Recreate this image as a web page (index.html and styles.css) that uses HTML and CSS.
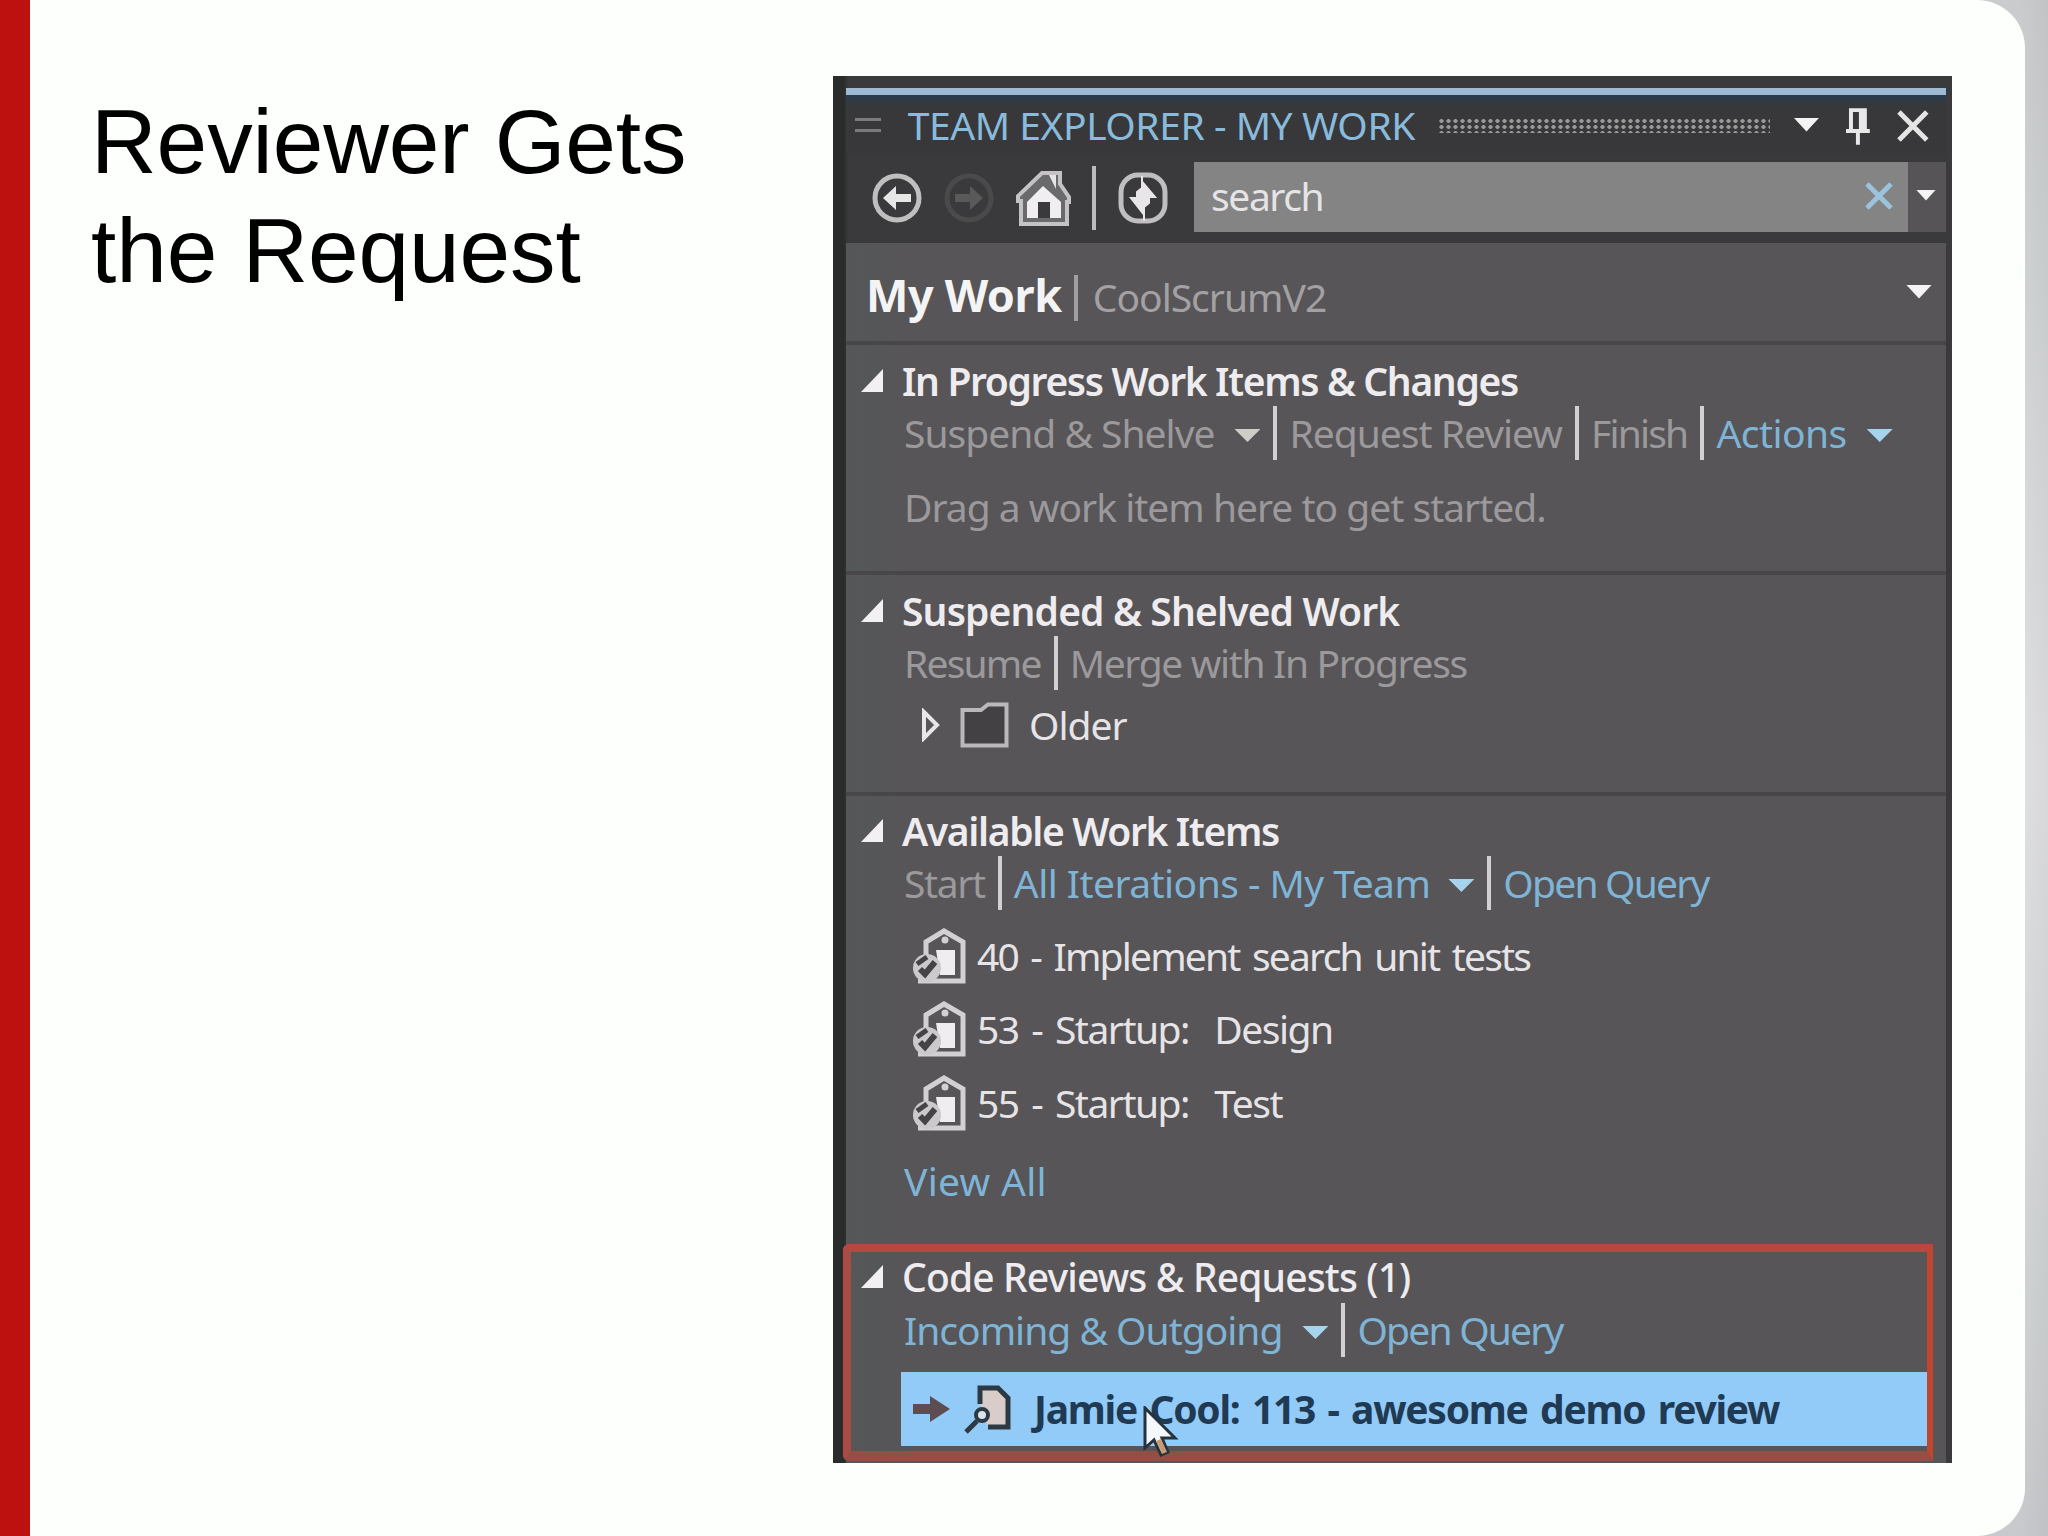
FILE: index.html
```html
<!DOCTYPE html>
<html lang="en">
<head>
    <meta charset="UTF-8">
    <meta name="viewport" content="width=device-width, initial-scale=1.0">
    <title>Reviewer Gets the Request</title>
    <link rel="stylesheet" href="styles.css">
</head>
<body>
    <!-- shared icons -->
    <svg class="defs">
        <symbol id="task" viewBox="0 0 54 56">
            <path d="M14 28V14L32 3l19 11v39H6" fill="none" stroke="#d2d0d2" stroke-width="5"/>
            <circle cx="33" cy="12" r="3.5" fill="#d2d0d2"/>
            <path d="M24 22h19v25H28z" fill="#efedef"/>
            <circle cx="15" cy="40" r="14" fill="#ccc9cc"/>
            <path d="M8 41l5 5 10-12" fill="none" stroke="#454345" stroke-width="6"/>
            <path d="M5 36l10-7" stroke="#454345" stroke-width="5"/>
        </symbol>
        <symbol id="fold" viewBox="0 0 22 23">
            <path d="M22 0v23H0z" fill="#f2f0f2"/>
        </symbol>
    </svg>

    <div class="slide">
        <h1>Reviewer Gets<br>the Request</h1>

        <div class="explorer">
            <div class="titlebar">
                <span class="grip"></span>
                <span class="caption">TEAM EXPLORER - MY WORK</span>
                <span class="dots"></span>
                <i class="arrow big"></i>
                <svg class="pin" width="24" height="38" viewBox="0 0 24 38">
                    <path d="M5 23V3h14v20M0 24h24M12 24v14" fill="none" stroke="#e8e8e8" stroke-width="4"/>
                    <path d="M13 3h6v20h-6z" fill="#e8e8e8"/>
                </svg>
                <svg class="close" width="32" height="32" viewBox="0 0 32 32">
                    <path d="M2 2l28 28M30 2L2 30" stroke="#e4e4e4" stroke-width="5"/>
                </svg>
            </div>

            <div class="toolbar">
                <svg width="52" height="52" viewBox="0 0 52 52">
                    <circle cx="26" cy="26" r="22" fill="none" stroke="#bfbfbf" stroke-width="5"/>
                    <path d="M12 26l13-12v8h15v8H25v8z" fill="#e6e6e6"/>
                </svg>
                <svg class="forward" width="52" height="52" viewBox="0 0 52 52">
                    <circle cx="26" cy="26" r="22" fill="none" stroke="#4b4a4b" stroke-width="5"/>
                    <path d="M40 26L27 14v8H12v8h15v8z" fill="#5a595a"/>
                </svg>
                <svg class="home" width="56" height="58" viewBox="0 0 56 58">
                    <path d="M5 55V32H2v-5L26 4h18v11l9 13v5h-2v22z" fill="#6a696b" stroke="#c4c2c5" stroke-width="4"/>
                    <path d="M27 17L11 33v16h34V33z" fill="#f0eef1"/>
                    <path d="M22 33h12v16H22z" fill="#3a393b"/>
                    <path d="M33 6h7v14z" fill="#e6e4e6"/>
                </svg>
                <i class="split"></i>
                <svg class="refresh" width="50" height="52" viewBox="0 0 50 52">
                    <rect x="3" y="3" width="44" height="46" rx="17" fill="none" stroke="#c0bec0" stroke-width="5"/>
                    <path d="M24 4v12l-5 4v6h-6l11 14zM26 49V35l5-4v-6h6L26 12z" fill="#e8e6e8" stroke="#e8e6e8" stroke-width="2"/>
                </svg>
                <div class="search">
                    <span>search</span>
                    <svg width="28" height="28" viewBox="0 0 28 28">
                        <path d="M2 2l24 24M26 2L2 26" stroke="#9cc3dc" stroke-width="5"/>
                    </svg>
                </div>
                <div class="search-menu"><i class="arrow small"></i></div>
            </div>

            <div class="content">
                <div class="header">
                    <b>My Work</b>
                    <i class="bar"></i>
                    <span>CoolScrumV2</span>
                    <i class="arrow big"></i>
                </div>

                <section class="progress">
                    <h2 class="tight"><svg><use href="#fold"/></svg>In Progress Work Items &amp; Changes</h2>
                    <div class="links">
                        <span>Suspend &amp; Shelve</span><i class="arrow"></i>
                        <i class="sep"></i>
                        <span>Request Review</span>
                        <i class="sep"></i>
                        <span class="tighter">Finish</span>
                        <i class="sep"></i>
                        <a class="wide">Actions</a><i class="arrow blue"></i>
                    </div>
                    <p class="hint">Drag a work item here to get started.</p>
                </section>

                <section class="suspended">
                    <h2><svg><use href="#fold"/></svg>Suspended &amp; Shelved Work</h2>
                    <div class="links">
                        <span class="tighter">Resume</span>
                        <i class="sep"></i>
                        <span class="tight">Merge with In Progress</span>
                    </div>
                    <div class="folder">
                        <svg width="18" height="34" viewBox="0 0 18 34">
                            <path d="M2 4v26L15 17z" fill="none" stroke="#e8e6e8" stroke-width="4"/>
                        </svg>
                        <svg width="49" height="46" viewBox="0 0 49 46">
                            <path d="M2.500 43.500V8H21l7-5.500h18.500v41z" fill="#434143" stroke="#bab8ba" stroke-width="4"/>
                        </svg>
                        <span>Older</span>
                    </div>
                </section>

                <section class="available">
                    <h2 class="tight"><svg><use href="#fold"/></svg>Available Work Items</h2>
                    <div class="links">
                        <span class="tight">Start</span>
                        <i class="sep"></i>
                        <a class="wide">All Iterations - My Team</a><i class="arrow blue"></i>
                        <i class="sep"></i>
                        <a class="tighter">Open Query</a>
                    </div>
                    <ul>
                        <li><svg><use href="#task"/></svg>40 - Implement search unit tests</li>
                        <li><svg><use href="#task"/></svg>53 - Startup:&nbsp; Design</li>
                        <li><svg><use href="#task"/></svg>55 - Startup:&nbsp; Test</li>
                    </ul>
                    <a class="view-all">View All</a>
                </section>

                <section class="reviews">
                    <h2><svg><use href="#fold"/></svg>Code Reviews &amp; Requests (1)</h2>
                    <div class="links">
                        <a>Incoming &amp; Outgoing</a><i class="arrow blue"></i>
                        <i class="sep"></i>
                        <a class="tighter">Open Query</a>
                    </div>
                    <div class="review">
                        <svg width="37" height="26" viewBox="0 0 37 26">
                            <path d="M0 8h17V0l20 13-20 13v-8H0z" fill="#5b4d52"/>
                        </svg>
                        <svg class="doc" width="48" height="50" viewBox="0 0 48 50">
                            <path d="M16 20V4h18l10 10v29H24" fill="#d9cdc9" stroke="#2d3a44" stroke-width="5"/>
                            <circle cx="18" cy="31" r="6" fill="#d9e4ee" stroke="#2d3a44" stroke-width="4"/>
                            <path d="M13 37L2 48" stroke="#2d3a44" stroke-width="5"/>
                        </svg>
                        <span>Jamie Cool: 113 - awesome demo review</span>
                        <svg class="cursor" width="36" height="52" viewBox="0 0 36 52">
                            <path d="M2 2v40l9-8 7 15 7-3-6-14h13z" fill="#f4f8fb" stroke="#26323c" stroke-width="3"/>
                            <path d="M13 35l6 13 5-2-6-13z" fill="#c79a78"/>
                        </svg>
                    </div>
                </section>
            </div>
        </div>
    </div>
</body>
</html>
```
FILE: styles.css
```css
* {
    box-sizing: border-box;
    margin: 0;
    padding: 0;
}

body {
    height: 1536px;
    overflow: hidden;
    background:
        linear-gradient(90deg, rgba(0,0,0,0) 2020px, rgba(0,0,0,0.04)),
        linear-gradient(#c9cbcd, #d0d3d4 18%, #e1e1e4 50%, #d0d3d4 84%, #c8c9cc);
}

.defs {
    position: absolute;
    width: 0;
    height: 0;
}

.slide {
    display: flex;
    width: 2025px;
    height: 1536px;
    padding: 76px 0 0 61px;
    border-left: 30px solid #bd1110;
    border-radius: 0 48px 48px 0;
    background: #fdfffd;
}

h1 {
    width: 742px;
    padding-top: 11px;
    font: 400 91px/109.3px "Liberation Sans", Arial, sans-serif;
    letter-spacing: -0.1px;
    color: #000;
}

/* Team Explorer panel */
.explorer {
    width: 1119px;
    height: 1387px;
    padding: 12px 6px 0 13px;
    background: linear-gradient(90deg, #2a2c2c 11px, #3a393b 15px);
    font: 400 39px/40px "Noto Sans", "Open Sans", sans-serif;
    letter-spacing: -1px;
    white-space: nowrap;
    color: #e6e4e6;
}

.wide { letter-spacing: -0.55px; }
.tight { letter-spacing: -1.35px; }
.tighter { letter-spacing: -1.8px; }

.titlebar {
    display: flex;
    align-items: center;
    height: 68px;
    padding: 0 17px 0 9px;
    border-top: 7px solid #9dbad2;
    background: linear-gradient(#2a3c4d, #38383a 12px);
}

.caption {
    margin: -1px 0 0 27px;
    letter-spacing: -0.45px;
    color: #88bbdc;
}

.grip, .dots {
    width: 26px;
    height: 15px;
    background: repeating-linear-gradient(#7b7b7b 0 3px, transparent 3px 11px);
}

.dots {
    width: 334px;
    margin-left: 23px;
    background: radial-gradient(#9a9a9a 1.800px, transparent 2.500px) 0 0 / 7px 6px;
}

.titlebar .arrow { margin: -2px 0 0 24px; }
.pin { margin-left: 27px; }
.close { margin-left: 27px; }

.arrow {
    width: 26px;
    height: 13px;
    margin: 5px 0 0 18px;
    background: #cfcdc8;
    clip-path: polygon(0 0, 100% 0, 50% 100%);
}

.arrow.blue { background: #a6d3ee; }
.arrow.big { height: 14px; background: #f4f4f4; }
.arrow.small { width: 20px; height: 11px; margin: 0; background: #f4f4f4; }

.toolbar {
    display: flex;
    align-items: center;
    height: 87px;
    padding: 0 0 3px 25px;
}

.forward { margin-left: 20px; }
.home { margin-left: 21px; }

.split {
    width: 4px;
    height: 64px;
    margin-left: 20px;
    background: #bdbbbd;
}

.refresh { margin: 0 26px 0 22px; }

.search, .search-menu {
    display: flex;
    align-items: center;
    height: 70px;
    margin-bottom: 2px;
}

.search {
    flex: 1;
    justify-content: space-between;
    padding: 0 15px 3px 17px;
    background: #848484;
    letter-spacing: -1.4px;
}

.search-menu {
    width: 38px;
    padding: 0 0 4px 8px;
    background: #565456;
}

.content {
    height: 1220px;
    background: linear-gradient(90deg, #545758, #575557 60px);
}

.header {
    display: flex;
    align-items: center;
    height: 98px;
    padding: 0 14px 0 20px;
}

.header b {
    margin-top: 6px;
    font-size: 45px;
    letter-spacing: -0.4px;
    color: #f4f4f4;
}

.header span {
    flex: 1;
    margin-top: 9px;
    color: #a3a1a3;
}

.bar {
    width: 4px;
    height: 46px;
    margin: 12px 15px 0 12px;
    background: #a09ea0;
}

.header .arrow { margin-top: -1px; }

section {
    padding: 15px 0 0 58px;
    border-top: 4px solid #484648;
}

.progress { height: 230px; padding-top: 16px; }
.suspended { height: 221px; padding-top: 16px; }
.available { height: 448px; }

h2 {
    display: flex;
    align-items: center;
    margin-left: -43px;
    font-size: 39px;
    font-weight: 600;
    color: #eeecee;
}

.suspended h2 { letter-spacing: -0.85px; }

h2 svg {
    width: 22px;
    height: 23px;
    margin: -1px 19px 0 0;
}

.links {
    display: flex;
    align-items: center;
    height: 40px;
    margin-top: 12px;
    color: #9b999b;
}

.links a, .view-all { color: #7fb4d6; }

.sep {
    width: 4px;
    height: 54px;
    margin: 0 12px 0 13px;
    background: #d2d0d2;
}

.progress .sep { margin: 0 12px 0 13px; }
.progress .arrow { margin-left: 20px; }

.hint {
    margin-top: 34px;
    color: #9b999b;
}

.folder {
    display: flex;
    align-items: center;
    margin: 19px 0 0 18px;
}

.folder svg + svg { margin: 0 20px 0 20px; }

ul {
    margin-top: 16px;
    list-style: none;
}

li {
    display: flex;
    align-items: center;
    height: 73.500px;
    padding-left: 8px;
    letter-spacing: -1.5px;
    word-spacing: 4px;
}

li:first-child { letter-spacing: -1.8px; }

li svg {
    width: 54px;
    height: 56px;
    margin: 0 11px 0 0;
}

.view-all {
    display: block;
    margin-top: 21px;
    letter-spacing: 0.3px;
}

/* highlighted section */
.reviews {
    height: 217px;
    margin: 4px 13px 0 -3px;
    padding: 5px 0 0 53px;
    border: solid;
    border-width: 8px 6px 10px 8px;
    border-color: #b84740 #c2452e #944f44 #ac4a44;
    border-radius: 6px 0 0 6px;
}

.reviews h2 {
    font-weight: 500;
    letter-spacing: -0.85px;
}

.reviews .links { margin-top: 13px; }
.reviews .arrow { margin-left: 20px; }

.review {
    position: relative;
    display: flex;
    align-items: center;
    height: 74px;
    margin: 22px 0 0 -3px;
    padding-left: 12px;
    background: #92cbf8;
    font-weight: 700;
    letter-spacing: -1.25px;
    word-spacing: 3.500px;
    color: #1f3a52;
}

.doc { margin: 0 22px 0 14px; }

.cursor {
    position: absolute;
    left: 242px;
    top: 34px;
}
```
